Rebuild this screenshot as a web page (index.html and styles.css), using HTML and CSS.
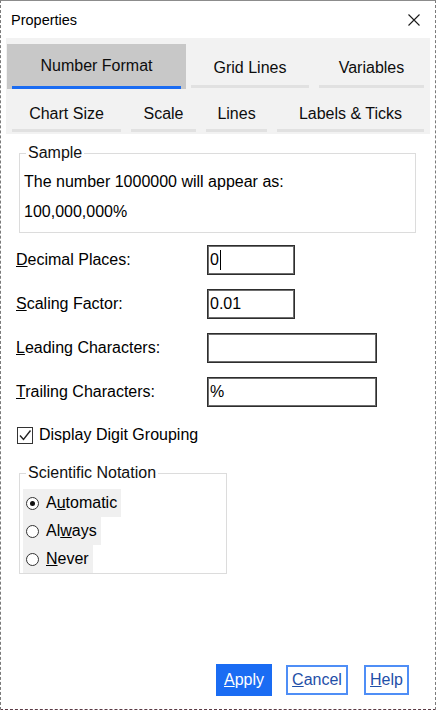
FILE: index.html
```html
<!DOCTYPE html>
<html lang="en">
<head>
<meta charset="utf-8">
<title>Properties</title>
<link rel="stylesheet" href="styles.css">
</head>
<body>
<div class="window">
  <div class="titlebar">
    <span class="title">Properties</span>
    <svg class="close" width="12" height="12" viewBox="0 0 12 12" aria-label="Close">
      <path d="M0.5 0.5 L11.5 11.5 M11.5 0.5 L0.5 11.5" stroke="#1a1a1a" stroke-width="1.1" fill="none"/>
    </svg>
  </div>

  <div class="tabstrip">
    <div class="tabrow row1">
      <div class="tab selected"><span class="tab-label">Number Format</span><span class="tab-bar"></span></div>
      <div class="tab"><span class="tab-label">Grid Lines</span><span class="tab-bar"></span></div>
      <div class="tab"><span class="tab-label">Variables</span><span class="tab-bar"></span></div>
    </div>
    <div class="tabrow row2">
      <div class="tab"><span class="tab-label">Chart Size</span><span class="tab-bar"></span></div>
      <div class="tab"><span class="tab-label">Scale</span><span class="tab-bar"></span></div>
      <div class="tab"><span class="tab-label">Lines</span><span class="tab-bar"></span></div>
      <div class="tab"><span class="tab-label">Labels &amp; Ticks</span><span class="tab-bar"></span></div>
    </div>
  </div>

  <div class="content">
    <fieldset class="group sample">
      <legend>Sample</legend>
      <div class="sample-line">The number 1000000 will appear as:</div>
      <div class="sample-line">100,000,000%</div>
    </fieldset>

    <div class="form-grid">
      <span class="label"><u>D</u>ecimal Places:</span>
      <div class="textbox short"><span>0</span><span class="caret"></span></div>

      <span class="label"><u>S</u>caling Factor:</span>
      <div class="textbox short"><span>0.01</span></div>

      <span class="label"><u>L</u>eading Characters:</span>
      <div class="textbox long"></div>

      <span class="label"><u>T</u>railing Characters:</span>
      <div class="textbox long"><span>%</span></div>
    </div>

    <div class="check-row">
      <span class="checkbox">
        <svg width="14" height="15" viewBox="0 0 14 15">
          <path d="M2 7.5 L5.5 11.5 L12.5 2.5" stroke="#222" stroke-width="1.4" fill="none"/>
        </svg>
      </span>
      <span class="check-text">Display Digit Grouping</span>
    </div>

    <fieldset class="group sci">
      <legend>Scientific Notation</legend>
      <div class="radio-row"><span class="radio checked"></span><span>A<u>u</u>tomatic</span></div>
      <div class="radio-row"><span class="radio"></span><span>Al<u>w</u>ays</span></div>
      <div class="radio-row"><span class="radio"></span><span><u>N</u>ever</span></div>
    </fieldset>
  </div>

  <div class="footer">
    <button class="btn primary"><u>A</u>pply</button>
    <button class="btn outline cancel"><u>C</u>ancel</button>
    <button class="btn outline help"><u>H</u>elp</button>
  </div>
</div>
</body>
</html>
```

FILE: styles.css
```css
* {
  box-sizing: border-box;
}

html, body {
  margin: 0;
  padding: 0;
  background: #ffffff;
}

body {
  font-family: "Liberation Sans", Arial, sans-serif;
  font-size: 16px;
  color: #000;
}

.window {
  width: 436px;
  height: 710px;
  display: flex;
  flex-direction: column;
  background: #fff;
  border-top: 1px solid #8c8c8c;
  border-left: 1px dashed #7a7a7a;
  border-right: 1px dashed #7a7a7a;
  border-bottom: 1px dashed #5a3a44;
}

/* Title bar */
.titlebar {
  height: 37px;
  display: flex;
  align-items: center;
  justify-content: space-between;
  padding: 0 15px 0 10px;
  flex: none;
}

.title {
  font-size: 14.5px;
  line-height: 18px;
  color: #000;
}

.close {
  display: block;
}

/* Tabs */
.tabstrip {
  flex: none;
  margin: 0 5px;
  padding: 6px 1px 0 1px;
  background: #f2f2f2;
}

.tabrow {
  display: grid;
  height: 45px;
}

.row1 {
  grid-template-columns: 179px 128px 115px;
}

.row2 {
  grid-template-columns: 119px 75px 71px 157px;
}

.tab {
  display: flex;
  flex-direction: column;
  align-items: stretch;
  height: 45px;
}

.tab-label {
  display: block;
  margin-top: 15px;
  line-height: 18px;
  text-align: center;
  white-space: nowrap;
  color: #0d0d0d;
}

.row2 .tab-label {
  margin-top: 16px;
}

.tab-bar {
  display: block;
  height: 3px;
  margin: auto 5px 1px 5px;
  background: #e1e1e1;
}

.row2 .tab-bar {
  margin-bottom: 2px;
}

.tab.selected {
  background: #c8c8c8;
}

.tab.selected .tab-label {
  margin-top: 13px;
}

.tab.selected .tab-bar {
  background: #1b6cf2;
  margin-bottom: 0;
}

/* Content */
.content {
  flex: none;
  padding: 0 0 0 15px;
}

.group {
  margin: 0 0 0 3px;
  border: 1px solid #dcdcdc;
  min-width: 0;
}

.group legend {
  padding: 0 2px;
  line-height: 18px;
  color: #111;
}

.sample {
  margin-top: 10px;
  width: 397px;
  padding: 5px 4px 5px 4px;
}

.sample legend {
  margin-left: 2px;
}

.sample-line {
  line-height: 30px;
  white-space: nowrap;
}

.form-grid {
  margin-top: 12px;
  display: grid;
  grid-template-columns: 191px auto;
  grid-auto-rows: 30px;
  row-gap: 14px;
  align-items: center;
}

.label {
  line-height: 18px;
  white-space: nowrap;
}

.textbox {
  height: 30px;
  border: 1px solid #2e2e2e;
  box-shadow: inset 0 0 0 1px #6e6e6e;
  background: #fff;
  display: flex;
  align-items: center;
  padding-left: 2px;
  line-height: 18px;
}

.textbox.short {
  width: 88px;
}

.textbox.long {
  width: 170px;
}

.caret {
  display: inline-block;
  width: 1px;
  height: 20px;
  background: #000;
  margin-left: 1px;
}

.check-row {
  margin-top: 13px;
  height: 30px;
  display: flex;
  align-items: center;
  padding-left: 1px;
}

.checkbox {
  width: 16px;
  height: 17px;
  border: 1px solid #333;
  background: #fff;
  display: flex;
  align-items: center;
  justify-content: center;
  flex: none;
}

.checkbox svg {
  display: block;
}

.check-text {
  margin-left: 6px;
  line-height: 18px;
}

.sci {
  margin-top: 14px;
  width: 208px;
  padding: 7px 3px 0 3px;
}

.sci legend {
  margin-left: 3px;
}

.radio-row {
  display: flex;
  align-items: center;
  width: fit-content;
  height: 28px;
  padding: 0 4px 0 3px;
  background: #f0f0f0;
  line-height: 18px;
}

.radio {
  width: 13px;
  height: 13px;
  border: 1px solid #333;
  border-radius: 50%;
  background: #fff;
  margin-right: 7px;
  display: flex;
  align-items: center;
  justify-content: center;
  flex: none;
}

.radio.checked::after {
  content: "";
  width: 5px;
  height: 5px;
  border-radius: 50%;
  background: #111;
}

/* Footer */
.footer {
  margin-top: auto;
  flex: none;
  display: flex;
  justify-content: flex-end;
  align-items: center;
  padding: 0 26px 13px 0;
}

.btn {
  font-family: "Liberation Sans", Arial, sans-serif;
  font-size: 16px;
  line-height: 18px;
  margin: 0;
  padding: 0;
  cursor: default;
}

.btn.primary {
  width: 56px;
  height: 32px;
  background: #1a6cf3;
  border: 1px solid #1a6cf3;
  color: #fff;
}

.btn.outline {
  height: 30px;
  background: #fff;
  border: 2px solid #4f8ef6;
  color: #1f4fa8;
}

.btn.cancel {
  width: 62px;
  margin-left: 14px;
}

.btn.help {
  width: 45px;
  margin-left: 16px;
}
```
